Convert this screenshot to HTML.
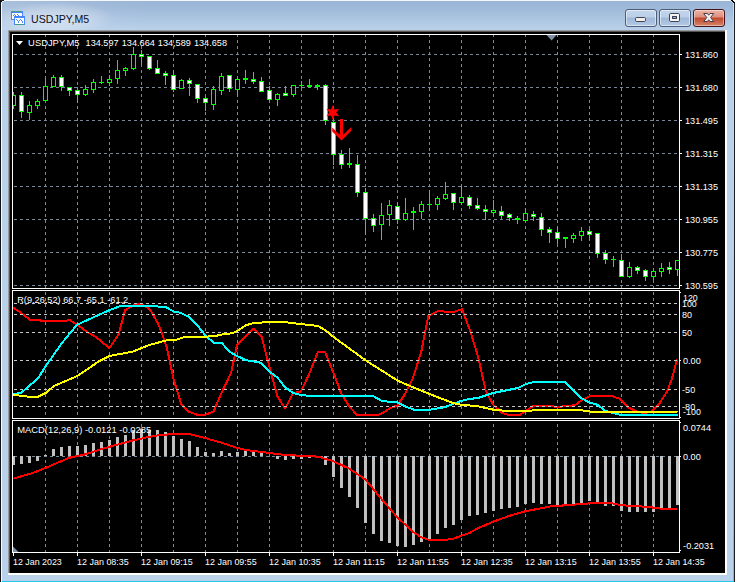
<!DOCTYPE html>
<html>
<head>
<meta charset="utf-8">
<title>USDJPY,M5</title>
<style>
html,body{margin:0;padding:0;}
body{width:737px;height:582px;overflow:hidden;background:#fff;position:relative;font-family:"Liberation Sans",sans-serif;}
#win{position:absolute;left:0;top:0;width:735px;height:582px;background:#b9d1ea;overflow:hidden;}
#tbar{position:absolute;left:0;top:0;width:735px;height:30px;
  background:linear-gradient(to bottom,#99b4d5 0px,#9fb9d9 8px,#adc6e2 20px,#b9d1ea 30px);}
#tglowl{position:absolute;left:0;top:0;width:150px;height:30px;background:linear-gradient(to right,rgba(255,255,255,.14),rgba(255,255,255,0));}
#tglowr{position:absolute;left:600px;top:0;width:135px;height:30px;background:linear-gradient(to right,rgba(255,255,255,0),rgba(255,255,255,.12));}
#tglowt{position:absolute;left:2px;top:2px;width:112px;height:30px;background:radial-gradient(ellipse at 48% 55%,rgba(255,255,255,.42) 0,rgba(255,255,255,.25) 40%,rgba(255,255,255,0) 72%);}
.edge{position:absolute;}
.btn{position:absolute;top:9px;width:30px;height:16px;border:1px solid #4e5d78;border-radius:3px;
  background:linear-gradient(to bottom,#c3d5ec 0,#bacee8 46%,#9fb8d8 48%,#b3c9e5 100%);box-shadow:inset 0 0 0 1px rgba(255,255,255,.5);}
#bclose{border-color:#48121c;background:linear-gradient(to bottom,#eab5a8 0,#dd8d7a 46%,#bf4528 48%,#d5846c 100%);box-shadow:inset 0 0 0 1px rgba(255,255,255,.4);}
</style>
</head>
<body>
<div id="win">
  <div id="tbar"></div><div id="tglowl"></div><div id="tglowt"></div>
  <!-- outer frame lines -->
  <div class="edge" style="left:0;top:0;width:735px;height:1px;background:#f4f7fb"></div>
  <div class="edge" style="left:0;top:0;width:1px;height:582px;background:#101418"></div>
  <div class="edge" style="left:1px;top:1px;width:1px;height:581px;background:#f8fbfe"></div>
  <div class="edge" style="left:733px;top:1px;width:1px;height:581px;background:linear-gradient(to bottom,#a8eafa 0,#8fe3f7 40%,#3fcdee 100%)"></div>
  <div class="edge" style="left:734px;top:2px;width:1px;height:580px;background:#1c2024"></div>
  <div class="edge" style="left:2px;top:581px;width:732px;height:1px;background:#22c6e6"></div>
  <!-- sunken client edge -->
  <div class="edge" style="left:8px;top:30px;width:719px;height:545px;background:#fff"></div>
  <div class="edge" style="left:8px;top:30px;width:717px;height:543px;background:#9a9a9a"></div>
  <div class="edge" style="left:9px;top:31px;width:716px;height:542px;background:#555"></div>
  <!-- corners -->
  <div class="edge" style="left:0;top:0;width:4px;height:1px;background:#1a1a1a"></div>
  <div class="edge" style="left:0;top:1px;width:2px;height:1px;background:#101010"></div>
  <div class="edge" style="left:2px;top:1px;width:2px;height:1px;background:#eef3f9"></div>
  <div class="edge" style="left:1px;top:2px;width:1px;height:1px;background:#d0dbe8"></div>
  <div class="edge" style="left:731px;top:0;width:2px;height:1px;background:#000"></div>
  <div class="edge" style="left:733px;top:0;width:2px;height:1px;background:#fff"></div>
  <div class="edge" style="left:731px;top:1px;width:1px;height:1px;background:#c8eefa"></div>
  <div class="edge" style="left:732px;top:1px;width:2px;height:1px;background:#000"></div>
  <div class="edge" style="left:734px;top:1px;width:1px;height:1px;background:#fff"></div>
  <div class="edge" style="left:732px;top:2px;width:1px;height:1px;background:#9fe4f6"></div>
  <div class="edge" style="left:733px;top:2px;width:2px;height:1px;background:#000"></div>
  <!-- caption buttons -->
  <div class="btn" id="bmin" style="left:625px"></div>
  <div class="btn" id="bmax" style="left:659px"></div>
  <div class="btn" id="bclose" style="left:693px"></div>
</div>
<svg width="737" height="582" viewBox="0 0 737 582" style="position:absolute;left:0;top:0" font-family="'Liberation Sans', sans-serif">
<rect x="10" y="32" width="715" height="541" fill="#000"/>
<g shape-rendering="crispEdges">
<line x1="14" y1="54.5" x2="679" y2="54.5" stroke="#778899" stroke-width="1" stroke-dasharray="3 3"/>
<line x1="14" y1="87.5" x2="679" y2="87.5" stroke="#778899" stroke-width="1" stroke-dasharray="3 3"/>
<line x1="14" y1="120.5" x2="679" y2="120.5" stroke="#778899" stroke-width="1" stroke-dasharray="3 3"/>
<line x1="14" y1="153.5" x2="679" y2="153.5" stroke="#778899" stroke-width="1" stroke-dasharray="3 3"/>
<line x1="14" y1="186.5" x2="679" y2="186.5" stroke="#778899" stroke-width="1" stroke-dasharray="3 3"/>
<line x1="14" y1="219.5" x2="679" y2="219.5" stroke="#778899" stroke-width="1" stroke-dasharray="3 3"/>
<line x1="14" y1="252.5" x2="679" y2="252.5" stroke="#778899" stroke-width="1" stroke-dasharray="3 3"/>
<line x1="14" y1="285.5" x2="679" y2="285.5" stroke="#778899" stroke-width="1" stroke-dasharray="3 3"/>
<line x1="45.5" y1="35" x2="45.5" y2="288" stroke="#778899" stroke-width="1" stroke-dasharray="3 3" stroke-dashoffset="1"/>
<line x1="77.5" y1="35" x2="77.5" y2="288" stroke="#778899" stroke-width="1" stroke-dasharray="3 3" stroke-dashoffset="1"/>
<line x1="109.5" y1="35" x2="109.5" y2="288" stroke="#778899" stroke-width="1" stroke-dasharray="3 3" stroke-dashoffset="1"/>
<line x1="141.5" y1="35" x2="141.5" y2="288" stroke="#778899" stroke-width="1" stroke-dasharray="3 3" stroke-dashoffset="1"/>
<line x1="173.5" y1="35" x2="173.5" y2="288" stroke="#778899" stroke-width="1" stroke-dasharray="3 3" stroke-dashoffset="1"/>
<line x1="205.5" y1="35" x2="205.5" y2="288" stroke="#778899" stroke-width="1" stroke-dasharray="3 3" stroke-dashoffset="1"/>
<line x1="237.5" y1="35" x2="237.5" y2="288" stroke="#778899" stroke-width="1" stroke-dasharray="3 3" stroke-dashoffset="1"/>
<line x1="269.5" y1="35" x2="269.5" y2="288" stroke="#778899" stroke-width="1" stroke-dasharray="3 3" stroke-dashoffset="1"/>
<line x1="301.5" y1="35" x2="301.5" y2="288" stroke="#778899" stroke-width="1" stroke-dasharray="3 3" stroke-dashoffset="1"/>
<line x1="333.5" y1="35" x2="333.5" y2="288" stroke="#778899" stroke-width="1" stroke-dasharray="3 3" stroke-dashoffset="1"/>
<line x1="365.5" y1="35" x2="365.5" y2="288" stroke="#778899" stroke-width="1" stroke-dasharray="3 3" stroke-dashoffset="1"/>
<line x1="397.5" y1="35" x2="397.5" y2="288" stroke="#778899" stroke-width="1" stroke-dasharray="3 3" stroke-dashoffset="1"/>
<line x1="429.5" y1="35" x2="429.5" y2="288" stroke="#778899" stroke-width="1" stroke-dasharray="3 3" stroke-dashoffset="1"/>
<line x1="461.5" y1="35" x2="461.5" y2="288" stroke="#778899" stroke-width="1" stroke-dasharray="3 3" stroke-dashoffset="1"/>
<line x1="493.5" y1="35" x2="493.5" y2="288" stroke="#778899" stroke-width="1" stroke-dasharray="3 3" stroke-dashoffset="1"/>
<line x1="525.5" y1="35" x2="525.5" y2="288" stroke="#778899" stroke-width="1" stroke-dasharray="3 3" stroke-dashoffset="1"/>
<line x1="557.5" y1="35" x2="557.5" y2="288" stroke="#778899" stroke-width="1" stroke-dasharray="3 3" stroke-dashoffset="1"/>
<line x1="589.5" y1="35" x2="589.5" y2="288" stroke="#778899" stroke-width="1" stroke-dasharray="3 3" stroke-dashoffset="1"/>
<line x1="621.5" y1="35" x2="621.5" y2="288" stroke="#778899" stroke-width="1" stroke-dasharray="3 3" stroke-dashoffset="1"/>
<line x1="653.5" y1="35" x2="653.5" y2="288" stroke="#778899" stroke-width="1" stroke-dasharray="3 3" stroke-dashoffset="1"/>
<line x1="45.5" y1="291" x2="45.5" y2="418" stroke="#778899" stroke-width="1" stroke-dasharray="3 3" stroke-dashoffset="5"/>
<line x1="77.5" y1="291" x2="77.5" y2="418" stroke="#778899" stroke-width="1" stroke-dasharray="3 3" stroke-dashoffset="5"/>
<line x1="109.5" y1="291" x2="109.5" y2="418" stroke="#778899" stroke-width="1" stroke-dasharray="3 3" stroke-dashoffset="5"/>
<line x1="141.5" y1="291" x2="141.5" y2="418" stroke="#778899" stroke-width="1" stroke-dasharray="3 3" stroke-dashoffset="5"/>
<line x1="173.5" y1="291" x2="173.5" y2="418" stroke="#778899" stroke-width="1" stroke-dasharray="3 3" stroke-dashoffset="5"/>
<line x1="205.5" y1="291" x2="205.5" y2="418" stroke="#778899" stroke-width="1" stroke-dasharray="3 3" stroke-dashoffset="5"/>
<line x1="237.5" y1="291" x2="237.5" y2="418" stroke="#778899" stroke-width="1" stroke-dasharray="3 3" stroke-dashoffset="5"/>
<line x1="269.5" y1="291" x2="269.5" y2="418" stroke="#778899" stroke-width="1" stroke-dasharray="3 3" stroke-dashoffset="5"/>
<line x1="301.5" y1="291" x2="301.5" y2="418" stroke="#778899" stroke-width="1" stroke-dasharray="3 3" stroke-dashoffset="5"/>
<line x1="333.5" y1="291" x2="333.5" y2="418" stroke="#778899" stroke-width="1" stroke-dasharray="3 3" stroke-dashoffset="5"/>
<line x1="365.5" y1="291" x2="365.5" y2="418" stroke="#778899" stroke-width="1" stroke-dasharray="3 3" stroke-dashoffset="5"/>
<line x1="397.5" y1="291" x2="397.5" y2="418" stroke="#778899" stroke-width="1" stroke-dasharray="3 3" stroke-dashoffset="5"/>
<line x1="429.5" y1="291" x2="429.5" y2="418" stroke="#778899" stroke-width="1" stroke-dasharray="3 3" stroke-dashoffset="5"/>
<line x1="461.5" y1="291" x2="461.5" y2="418" stroke="#778899" stroke-width="1" stroke-dasharray="3 3" stroke-dashoffset="5"/>
<line x1="493.5" y1="291" x2="493.5" y2="418" stroke="#778899" stroke-width="1" stroke-dasharray="3 3" stroke-dashoffset="5"/>
<line x1="525.5" y1="291" x2="525.5" y2="418" stroke="#778899" stroke-width="1" stroke-dasharray="3 3" stroke-dashoffset="5"/>
<line x1="557.5" y1="291" x2="557.5" y2="418" stroke="#778899" stroke-width="1" stroke-dasharray="3 3" stroke-dashoffset="5"/>
<line x1="589.5" y1="291" x2="589.5" y2="418" stroke="#778899" stroke-width="1" stroke-dasharray="3 3" stroke-dashoffset="5"/>
<line x1="621.5" y1="291" x2="621.5" y2="418" stroke="#778899" stroke-width="1" stroke-dasharray="3 3" stroke-dashoffset="5"/>
<line x1="653.5" y1="291" x2="653.5" y2="418" stroke="#778899" stroke-width="1" stroke-dasharray="3 3" stroke-dashoffset="5"/>
<line x1="14" y1="456.5" x2="679" y2="456.5" stroke="#778899" stroke-width="1" stroke-dasharray="3 3"/>
<line x1="45.5" y1="421" x2="45.5" y2="552" stroke="#778899" stroke-width="1" stroke-dasharray="3 3" stroke-dashoffset="3"/>
<line x1="77.5" y1="421" x2="77.5" y2="552" stroke="#778899" stroke-width="1" stroke-dasharray="3 3" stroke-dashoffset="3"/>
<line x1="109.5" y1="421" x2="109.5" y2="552" stroke="#778899" stroke-width="1" stroke-dasharray="3 3" stroke-dashoffset="3"/>
<line x1="141.5" y1="421" x2="141.5" y2="552" stroke="#778899" stroke-width="1" stroke-dasharray="3 3" stroke-dashoffset="3"/>
<line x1="173.5" y1="421" x2="173.5" y2="552" stroke="#778899" stroke-width="1" stroke-dasharray="3 3" stroke-dashoffset="3"/>
<line x1="205.5" y1="421" x2="205.5" y2="552" stroke="#778899" stroke-width="1" stroke-dasharray="3 3" stroke-dashoffset="3"/>
<line x1="237.5" y1="421" x2="237.5" y2="552" stroke="#778899" stroke-width="1" stroke-dasharray="3 3" stroke-dashoffset="3"/>
<line x1="269.5" y1="421" x2="269.5" y2="552" stroke="#778899" stroke-width="1" stroke-dasharray="3 3" stroke-dashoffset="3"/>
<line x1="301.5" y1="421" x2="301.5" y2="552" stroke="#778899" stroke-width="1" stroke-dasharray="3 3" stroke-dashoffset="3"/>
<line x1="333.5" y1="421" x2="333.5" y2="552" stroke="#778899" stroke-width="1" stroke-dasharray="3 3" stroke-dashoffset="3"/>
<line x1="365.5" y1="421" x2="365.5" y2="552" stroke="#778899" stroke-width="1" stroke-dasharray="3 3" stroke-dashoffset="3"/>
<line x1="397.5" y1="421" x2="397.5" y2="552" stroke="#778899" stroke-width="1" stroke-dasharray="3 3" stroke-dashoffset="3"/>
<line x1="429.5" y1="421" x2="429.5" y2="552" stroke="#778899" stroke-width="1" stroke-dasharray="3 3" stroke-dashoffset="3"/>
<line x1="461.5" y1="421" x2="461.5" y2="552" stroke="#778899" stroke-width="1" stroke-dasharray="3 3" stroke-dashoffset="3"/>
<line x1="493.5" y1="421" x2="493.5" y2="552" stroke="#778899" stroke-width="1" stroke-dasharray="3 3" stroke-dashoffset="3"/>
<line x1="525.5" y1="421" x2="525.5" y2="552" stroke="#778899" stroke-width="1" stroke-dasharray="3 3" stroke-dashoffset="3"/>
<line x1="557.5" y1="421" x2="557.5" y2="552" stroke="#778899" stroke-width="1" stroke-dasharray="3 3" stroke-dashoffset="3"/>
<line x1="589.5" y1="421" x2="589.5" y2="552" stroke="#778899" stroke-width="1" stroke-dasharray="3 3" stroke-dashoffset="3"/>
<line x1="621.5" y1="421" x2="621.5" y2="552" stroke="#778899" stroke-width="1" stroke-dasharray="3 3" stroke-dashoffset="3"/>
<line x1="653.5" y1="421" x2="653.5" y2="552" stroke="#778899" stroke-width="1" stroke-dasharray="3 3" stroke-dashoffset="3"/>
</g>
<defs><clipPath id="cx"><rect x="13" y="35" width="666" height="517"/></clipPath></defs>
<g clip-path="url(#cx)">
<g shape-rendering="crispEdges" fill="#c0c0c0">
<rect x="12" y="456" width="3" height="9"/>
<rect x="20" y="456" width="3" height="8"/>
<rect x="28" y="456" width="3" height="7"/>
<rect x="36" y="456" width="3" height="5"/>
<rect x="44" y="455" width="3" height="1"/>
<rect x="52" y="449" width="3" height="7"/>
<rect x="60" y="447" width="3" height="9"/>
<rect x="68" y="446" width="3" height="10"/>
<rect x="76" y="446" width="3" height="10"/>
<rect x="84" y="445" width="3" height="11"/>
<rect x="92" y="443" width="3" height="13"/>
<rect x="100" y="442" width="3" height="14"/>
<rect x="108" y="440" width="3" height="16"/>
<rect x="116" y="437" width="3" height="19"/>
<rect x="124" y="435" width="3" height="21"/>
<rect x="132" y="430" width="3" height="26"/>
<rect x="140" y="429" width="3" height="27"/>
<rect x="148" y="430" width="3" height="26"/>
<rect x="156" y="430" width="3" height="26"/>
<rect x="164" y="432" width="3" height="24"/>
<rect x="172" y="436" width="3" height="20"/>
<rect x="180" y="439" width="3" height="17"/>
<rect x="188" y="441" width="3" height="15"/>
<rect x="196" y="447" width="3" height="9"/>
<rect x="204" y="452" width="3" height="4"/>
<rect x="212" y="453" width="3" height="3"/>
<rect x="220" y="451" width="3" height="5"/>
<rect x="228" y="453" width="3" height="3"/>
<rect x="236" y="452" width="3" height="4"/>
<rect x="244" y="450" width="3" height="6"/>
<rect x="252" y="451" width="3" height="5"/>
<rect x="260" y="453" width="3" height="3"/>
<rect x="276" y="456" width="3" height="3"/>
<rect x="284" y="456" width="3" height="4"/>
<rect x="292" y="456" width="3" height="3"/>
<rect x="300" y="456" width="3" height="3"/>
<rect x="308" y="456" width="3" height="2"/>
<rect x="316" y="456" width="3" height="1"/>
<rect x="324" y="456" width="3" height="9"/>
<rect x="332" y="456" width="3" height="21"/>
<rect x="340" y="456" width="3" height="32"/>
<rect x="348" y="456" width="3" height="41"/>
<rect x="356" y="456" width="3" height="52"/>
<rect x="364" y="456" width="3" height="67"/>
<rect x="372" y="456" width="3" height="78"/>
<rect x="380" y="456" width="3" height="85"/>
<rect x="388" y="456" width="3" height="87"/>
<rect x="396" y="456" width="3" height="90"/>
<rect x="404" y="456" width="3" height="91"/>
<rect x="412" y="456" width="3" height="89"/>
<rect x="420" y="456" width="3" height="86"/>
<rect x="428" y="456" width="3" height="83"/>
<rect x="436" y="456" width="3" height="78"/>
<rect x="444" y="456" width="3" height="72"/>
<rect x="452" y="456" width="3" height="69"/>
<rect x="460" y="456" width="3" height="64"/>
<rect x="468" y="456" width="3" height="60"/>
<rect x="476" y="456" width="3" height="59"/>
<rect x="484" y="456" width="3" height="57"/>
<rect x="492" y="456" width="3" height="55"/>
<rect x="500" y="456" width="3" height="53"/>
<rect x="508" y="456" width="3" height="52"/>
<rect x="516" y="456" width="3" height="51"/>
<rect x="524" y="456" width="3" height="48"/>
<rect x="532" y="456" width="3" height="47"/>
<rect x="540" y="456" width="3" height="48"/>
<rect x="548" y="456" width="3" height="48"/>
<rect x="556" y="456" width="3" height="49"/>
<rect x="564" y="456" width="3" height="49"/>
<rect x="572" y="456" width="3" height="48"/>
<rect x="580" y="456" width="3" height="47"/>
<rect x="588" y="456" width="3" height="45"/>
<rect x="596" y="456" width="3" height="47"/>
<rect x="604" y="456" width="3" height="50"/>
<rect x="612" y="456" width="3" height="50"/>
<rect x="620" y="456" width="3" height="55"/>
<rect x="628" y="456" width="3" height="56"/>
<rect x="636" y="456" width="3" height="56"/>
<rect x="644" y="456" width="3" height="56"/>
<rect x="652" y="456" width="3" height="56"/>
<rect x="660" y="456" width="3" height="53"/>
<rect x="668" y="456" width="3" height="52"/>
<rect x="676" y="456" width="3" height="49"/>
</g>
<g shape-rendering="crispEdges">
<rect x="13" y="92" width="1" height="17" fill="#00ff00"/>
<rect x="11" y="95" width="5" height="11" fill="#00ff00"/>
<rect x="12" y="96" width="3" height="9" fill="#000"/>
<rect x="21" y="92" width="1" height="26" fill="#00ff00"/>
<rect x="19" y="95" width="5" height="17" fill="#00ff00"/>
<rect x="20" y="96" width="3" height="15" fill="#fff"/>
<rect x="29" y="101" width="1" height="19" fill="#00ff00"/>
<rect x="27" y="105" width="5" height="8" fill="#00ff00"/>
<rect x="28" y="106" width="3" height="6" fill="#000"/>
<rect x="37" y="99" width="1" height="10" fill="#00ff00"/>
<rect x="35" y="101" width="5" height="5" fill="#00ff00"/>
<rect x="36" y="102" width="3" height="3" fill="#000"/>
<rect x="45" y="78" width="1" height="23" fill="#00ff00"/>
<rect x="43" y="86" width="5" height="15" fill="#00ff00"/>
<rect x="44" y="87" width="3" height="13" fill="#000"/>
<rect x="53" y="75" width="1" height="12" fill="#00ff00"/>
<rect x="51" y="77" width="5" height="10" fill="#00ff00"/>
<rect x="52" y="78" width="3" height="8" fill="#000"/>
<rect x="61" y="75" width="1" height="16" fill="#00ff00"/>
<rect x="59" y="77" width="5" height="10" fill="#00ff00"/>
<rect x="60" y="78" width="3" height="8" fill="#fff"/>
<rect x="69" y="87" width="1" height="9" fill="#00ff00"/>
<rect x="67" y="87" width="5" height="4" fill="#00ff00"/>
<rect x="68" y="88" width="3" height="2" fill="#fff"/>
<rect x="77" y="87" width="1" height="16" fill="#00ff00"/>
<rect x="75" y="90" width="5" height="5" fill="#00ff00"/>
<rect x="76" y="91" width="3" height="3" fill="#fff"/>
<rect x="85" y="85" width="1" height="11" fill="#00ff00"/>
<rect x="83" y="89" width="5" height="6" fill="#00ff00"/>
<rect x="84" y="90" width="3" height="4" fill="#000"/>
<rect x="93" y="79" width="1" height="14" fill="#00ff00"/>
<rect x="91" y="82" width="5" height="8" fill="#00ff00"/>
<rect x="92" y="83" width="3" height="6" fill="#000"/>
<rect x="101" y="76" width="1" height="8" fill="#00ff00"/>
<rect x="99" y="82" width="5" height="1" fill="#00ff00"/>
<rect x="109" y="75" width="1" height="11" fill="#00ff00"/>
<rect x="107" y="79" width="5" height="4" fill="#00ff00"/>
<rect x="108" y="80" width="3" height="2" fill="#000"/>
<rect x="117" y="60" width="1" height="24" fill="#00ff00"/>
<rect x="115" y="70" width="5" height="9" fill="#00ff00"/>
<rect x="116" y="71" width="3" height="7" fill="#000"/>
<rect x="125" y="67" width="1" height="9" fill="#00ff00"/>
<rect x="123" y="68" width="5" height="3" fill="#00ff00"/>
<rect x="124" y="69" width="3" height="1" fill="#000"/>
<rect x="133" y="47" width="1" height="23" fill="#00ff00"/>
<rect x="131" y="54" width="5" height="15" fill="#00ff00"/>
<rect x="132" y="55" width="3" height="13" fill="#000"/>
<rect x="141" y="50" width="1" height="15" fill="#00ff00"/>
<rect x="139" y="54" width="5" height="3" fill="#00ff00"/>
<rect x="140" y="55" width="3" height="1" fill="#fff"/>
<rect x="149" y="56" width="1" height="14" fill="#00ff00"/>
<rect x="147" y="56" width="5" height="13" fill="#00ff00"/>
<rect x="148" y="57" width="3" height="11" fill="#fff"/>
<rect x="157" y="60" width="1" height="14" fill="#00ff00"/>
<rect x="155" y="68" width="5" height="6" fill="#00ff00"/>
<rect x="156" y="69" width="3" height="4" fill="#fff"/>
<rect x="165" y="71" width="1" height="14" fill="#00ff00"/>
<rect x="163" y="73" width="5" height="3" fill="#00ff00"/>
<rect x="164" y="74" width="3" height="1" fill="#fff"/>
<rect x="173" y="70" width="1" height="22" fill="#00ff00"/>
<rect x="171" y="75" width="5" height="15" fill="#00ff00"/>
<rect x="172" y="76" width="3" height="13" fill="#fff"/>
<rect x="181" y="79" width="1" height="10" fill="#00ff00"/>
<rect x="179" y="80" width="5" height="9" fill="#00ff00"/>
<rect x="180" y="81" width="3" height="7" fill="#000"/>
<rect x="189" y="78" width="1" height="18" fill="#00ff00"/>
<rect x="187" y="80" width="5" height="4" fill="#00ff00"/>
<rect x="188" y="81" width="3" height="2" fill="#fff"/>
<rect x="197" y="84" width="1" height="19" fill="#00ff00"/>
<rect x="195" y="84" width="5" height="15" fill="#00ff00"/>
<rect x="196" y="85" width="3" height="13" fill="#fff"/>
<rect x="205" y="97" width="1" height="14" fill="#00ff00"/>
<rect x="203" y="98" width="5" height="5" fill="#00ff00"/>
<rect x="204" y="99" width="3" height="3" fill="#fff"/>
<rect x="213" y="86" width="1" height="24" fill="#00ff00"/>
<rect x="211" y="89" width="5" height="16" fill="#00ff00"/>
<rect x="212" y="90" width="3" height="14" fill="#000"/>
<rect x="221" y="73" width="1" height="22" fill="#00ff00"/>
<rect x="219" y="76" width="5" height="15" fill="#00ff00"/>
<rect x="220" y="77" width="3" height="13" fill="#000"/>
<rect x="229" y="75" width="1" height="17" fill="#00ff00"/>
<rect x="227" y="75" width="5" height="14" fill="#00ff00"/>
<rect x="228" y="76" width="3" height="12" fill="#fff"/>
<rect x="237" y="77" width="1" height="20" fill="#00ff00"/>
<rect x="235" y="79" width="5" height="11" fill="#00ff00"/>
<rect x="236" y="80" width="3" height="9" fill="#000"/>
<rect x="245" y="70" width="1" height="14" fill="#00ff00"/>
<rect x="243" y="78" width="5" height="2" fill="#00ff00"/>
<rect x="253" y="72" width="1" height="12" fill="#00ff00"/>
<rect x="251" y="79" width="5" height="3" fill="#00ff00"/>
<rect x="252" y="80" width="3" height="1" fill="#fff"/>
<rect x="261" y="77" width="1" height="15" fill="#00ff00"/>
<rect x="259" y="81" width="5" height="11" fill="#00ff00"/>
<rect x="260" y="82" width="3" height="9" fill="#fff"/>
<rect x="269" y="86" width="1" height="15" fill="#00ff00"/>
<rect x="267" y="90" width="5" height="10" fill="#00ff00"/>
<rect x="268" y="91" width="3" height="8" fill="#fff"/>
<rect x="277" y="93" width="1" height="13" fill="#00ff00"/>
<rect x="275" y="94" width="5" height="6" fill="#00ff00"/>
<rect x="276" y="95" width="3" height="4" fill="#000"/>
<rect x="285" y="86" width="1" height="9" fill="#00ff00"/>
<rect x="283" y="93" width="5" height="3" fill="#00ff00"/>
<rect x="284" y="94" width="3" height="1" fill="#fff"/>
<rect x="293" y="85" width="1" height="12" fill="#00ff00"/>
<rect x="291" y="85" width="5" height="10" fill="#00ff00"/>
<rect x="292" y="86" width="3" height="8" fill="#000"/>
<rect x="301" y="81" width="1" height="7" fill="#00ff00"/>
<rect x="299" y="85" width="5" height="1" fill="#00ff00"/>
<rect x="309" y="79" width="1" height="9" fill="#00ff00"/>
<rect x="307" y="85" width="5" height="2" fill="#00ff00"/>
<rect x="317" y="84" width="1" height="6" fill="#00ff00"/>
<rect x="315" y="85" width="5" height="2" fill="#00ff00"/>
<rect x="325" y="84" width="1" height="41" fill="#00ff00"/>
<rect x="323" y="85" width="5" height="36" fill="#00ff00"/>
<rect x="324" y="86" width="3" height="34" fill="#fff"/>
<rect x="333" y="121" width="1" height="44" fill="#00ff00"/>
<rect x="331" y="122" width="5" height="33" fill="#00ff00"/>
<rect x="332" y="123" width="3" height="31" fill="#fff"/>
<rect x="341" y="150" width="1" height="19" fill="#00ff00"/>
<rect x="339" y="154" width="5" height="11" fill="#00ff00"/>
<rect x="340" y="155" width="3" height="9" fill="#fff"/>
<rect x="349" y="148" width="1" height="20" fill="#00ff00"/>
<rect x="347" y="163" width="5" height="2" fill="#00ff00"/>
<rect x="357" y="155" width="1" height="42" fill="#00ff00"/>
<rect x="355" y="164" width="5" height="29" fill="#00ff00"/>
<rect x="356" y="165" width="3" height="27" fill="#fff"/>
<rect x="365" y="188" width="1" height="46" fill="#00ff00"/>
<rect x="363" y="192" width="5" height="27" fill="#00ff00"/>
<rect x="364" y="193" width="3" height="25" fill="#fff"/>
<rect x="373" y="214" width="1" height="18" fill="#00ff00"/>
<rect x="371" y="218" width="5" height="8" fill="#00ff00"/>
<rect x="372" y="219" width="3" height="6" fill="#fff"/>
<rect x="381" y="203" width="1" height="37" fill="#00ff00"/>
<rect x="379" y="215" width="5" height="10" fill="#00ff00"/>
<rect x="380" y="216" width="3" height="8" fill="#000"/>
<rect x="389" y="200" width="1" height="26" fill="#00ff00"/>
<rect x="387" y="205" width="5" height="10" fill="#00ff00"/>
<rect x="388" y="206" width="3" height="8" fill="#000"/>
<rect x="397" y="202" width="1" height="22" fill="#00ff00"/>
<rect x="395" y="206" width="5" height="14" fill="#00ff00"/>
<rect x="396" y="207" width="3" height="12" fill="#fff"/>
<rect x="405" y="198" width="1" height="23" fill="#00ff00"/>
<rect x="403" y="213" width="5" height="7" fill="#00ff00"/>
<rect x="404" y="214" width="3" height="5" fill="#000"/>
<rect x="413" y="207" width="1" height="23" fill="#00ff00"/>
<rect x="411" y="211" width="5" height="2" fill="#00ff00"/>
<rect x="421" y="201" width="1" height="18" fill="#00ff00"/>
<rect x="419" y="204" width="5" height="8" fill="#00ff00"/>
<rect x="420" y="205" width="3" height="6" fill="#000"/>
<rect x="429" y="190" width="1" height="20" fill="#00ff00"/>
<rect x="427" y="204" width="5" height="1" fill="#00ff00"/>
<rect x="437" y="196" width="1" height="14" fill="#00ff00"/>
<rect x="435" y="198" width="5" height="7" fill="#00ff00"/>
<rect x="436" y="199" width="3" height="5" fill="#000"/>
<rect x="445" y="182" width="1" height="18" fill="#00ff00"/>
<rect x="443" y="194" width="5" height="5" fill="#00ff00"/>
<rect x="444" y="195" width="3" height="3" fill="#000"/>
<rect x="453" y="193" width="1" height="17" fill="#00ff00"/>
<rect x="451" y="193" width="5" height="10" fill="#00ff00"/>
<rect x="452" y="194" width="3" height="8" fill="#fff"/>
<rect x="461" y="186" width="1" height="19" fill="#00ff00"/>
<rect x="459" y="197" width="5" height="6" fill="#00ff00"/>
<rect x="460" y="198" width="3" height="4" fill="#000"/>
<rect x="469" y="195" width="1" height="14" fill="#00ff00"/>
<rect x="467" y="197" width="5" height="9" fill="#00ff00"/>
<rect x="468" y="198" width="3" height="7" fill="#fff"/>
<rect x="477" y="198" width="1" height="12" fill="#00ff00"/>
<rect x="475" y="205" width="5" height="4" fill="#00ff00"/>
<rect x="476" y="206" width="3" height="2" fill="#fff"/>
<rect x="485" y="205" width="1" height="15" fill="#00ff00"/>
<rect x="483" y="209" width="5" height="3" fill="#00ff00"/>
<rect x="484" y="210" width="3" height="1" fill="#fff"/>
<rect x="493" y="200" width="1" height="14" fill="#00ff00"/>
<rect x="491" y="210" width="5" height="3" fill="#00ff00"/>
<rect x="492" y="211" width="3" height="1" fill="#000"/>
<rect x="501" y="206" width="1" height="13" fill="#00ff00"/>
<rect x="499" y="211" width="5" height="5" fill="#00ff00"/>
<rect x="500" y="212" width="3" height="3" fill="#fff"/>
<rect x="509" y="213" width="1" height="8" fill="#00ff00"/>
<rect x="507" y="214" width="5" height="4" fill="#00ff00"/>
<rect x="508" y="215" width="3" height="2" fill="#fff"/>
<rect x="517" y="216" width="1" height="8" fill="#00ff00"/>
<rect x="515" y="218" width="5" height="2" fill="#00ff00"/>
<rect x="525" y="208" width="1" height="14" fill="#00ff00"/>
<rect x="523" y="213" width="5" height="8" fill="#00ff00"/>
<rect x="524" y="214" width="3" height="6" fill="#000"/>
<rect x="533" y="211" width="1" height="10" fill="#00ff00"/>
<rect x="531" y="214" width="5" height="3" fill="#00ff00"/>
<rect x="532" y="215" width="3" height="1" fill="#fff"/>
<rect x="541" y="213" width="1" height="23" fill="#00ff00"/>
<rect x="539" y="217" width="5" height="13" fill="#00ff00"/>
<rect x="540" y="218" width="3" height="11" fill="#fff"/>
<rect x="549" y="227" width="1" height="16" fill="#00ff00"/>
<rect x="547" y="229" width="5" height="4" fill="#00ff00"/>
<rect x="548" y="230" width="3" height="2" fill="#fff"/>
<rect x="557" y="226" width="1" height="18" fill="#00ff00"/>
<rect x="555" y="232" width="5" height="7" fill="#00ff00"/>
<rect x="556" y="233" width="3" height="5" fill="#fff"/>
<rect x="565" y="237" width="1" height="11" fill="#00ff00"/>
<rect x="563" y="237" width="5" height="2" fill="#00ff00"/>
<rect x="573" y="233" width="1" height="10" fill="#00ff00"/>
<rect x="571" y="235" width="5" height="4" fill="#00ff00"/>
<rect x="572" y="236" width="3" height="2" fill="#000"/>
<rect x="581" y="227" width="1" height="14" fill="#00ff00"/>
<rect x="579" y="231" width="5" height="5" fill="#00ff00"/>
<rect x="580" y="232" width="3" height="3" fill="#000"/>
<rect x="589" y="229" width="1" height="11" fill="#00ff00"/>
<rect x="587" y="231" width="5" height="4" fill="#00ff00"/>
<rect x="588" y="232" width="3" height="2" fill="#fff"/>
<rect x="597" y="233" width="1" height="25" fill="#00ff00"/>
<rect x="595" y="233" width="5" height="21" fill="#00ff00"/>
<rect x="596" y="234" width="3" height="19" fill="#fff"/>
<rect x="605" y="250" width="1" height="14" fill="#00ff00"/>
<rect x="603" y="253" width="5" height="7" fill="#00ff00"/>
<rect x="604" y="254" width="3" height="5" fill="#fff"/>
<rect x="613" y="256" width="1" height="11" fill="#00ff00"/>
<rect x="611" y="259" width="5" height="1" fill="#00ff00"/>
<rect x="621" y="254" width="1" height="23" fill="#00ff00"/>
<rect x="619" y="260" width="5" height="17" fill="#00ff00"/>
<rect x="620" y="261" width="3" height="15" fill="#fff"/>
<rect x="629" y="262" width="1" height="16" fill="#00ff00"/>
<rect x="627" y="267" width="5" height="10" fill="#00ff00"/>
<rect x="628" y="268" width="3" height="8" fill="#000"/>
<rect x="637" y="266" width="1" height="8" fill="#00ff00"/>
<rect x="635" y="267" width="5" height="4" fill="#00ff00"/>
<rect x="636" y="268" width="3" height="2" fill="#fff"/>
<rect x="645" y="269" width="1" height="12" fill="#00ff00"/>
<rect x="643" y="270" width="5" height="7" fill="#00ff00"/>
<rect x="644" y="271" width="3" height="5" fill="#fff"/>
<rect x="653" y="269" width="1" height="11" fill="#00ff00"/>
<rect x="651" y="271" width="5" height="6" fill="#00ff00"/>
<rect x="652" y="272" width="3" height="4" fill="#000"/>
<rect x="661" y="263" width="1" height="14" fill="#00ff00"/>
<rect x="659" y="268" width="5" height="4" fill="#00ff00"/>
<rect x="660" y="269" width="3" height="2" fill="#000"/>
<rect x="669" y="262" width="1" height="12" fill="#00ff00"/>
<rect x="667" y="267" width="5" height="3" fill="#00ff00"/>
<rect x="668" y="268" width="3" height="1" fill="#fff"/>
<rect x="677" y="260" width="1" height="16" fill="#00ff00"/>
<rect x="675" y="260" width="5" height="10" fill="#00ff00"/>
<rect x="676" y="261" width="3" height="8" fill="#000"/>
</g>
<polygon points="332.80,105.00 334.50,109.56 339.30,108.75 336.20,112.50 339.30,116.25 334.50,115.44 332.80,120.00 331.10,115.44 326.30,116.25 329.40,112.50 326.30,108.75 331.10,109.56" fill="#ff0000"/>
<path d="M341.5 119 V139" stroke="#ff0000" stroke-width="3" fill="none"/>
<polygon points="332.2,127.6 332.2,131.4 341.5,140.6 351.3,130.8 351.3,126.9 341.5,136.4" fill="#ff0000"/>
<g shape-rendering="crispEdges">
<polyline points="13.4,307.5 30.1,319.8 53.6,321.4 70.3,320.3 77.0,324.8 87.1,331.9 96.0,337.0 109.4,348.2 118.4,334.8 125.1,310.2 135.1,304.2 141.8,304.2 149.7,309.1 157.5,322.5 161.1,331.0 166.7,347.1 173.4,378.4 181.2,404.1 189.1,411.9 196.9,414.6 205.8,414.6 213.6,411.5 221.5,392.9 231.1,372.8 237.1,344.9 253.4,328.8 261.7,337.0 269.5,367.2 277.3,396.3 285.1,408.6 293.0,392.9 300.8,391.8 309.7,372.8 317.8,352.2 325.2,352.2 333.5,372.8 341.3,393.6 349.1,406.3 357.4,415.3 377.0,415.3 381.5,413.7 389.3,408.6 397.6,405.2 405.0,394.0 412.8,378.4 421.3,351.6 428.4,315.8 438.5,310.9 446.3,311.8 454.1,311.8 462.0,309.1 470.0,330.3 477.9,356.0 485.7,390.7 493.5,405.2 501.3,412.4 509.2,415.3 519.2,415.3 525.9,410.8 533.7,405.6 548.3,405.6 557.2,407.0 575.1,405.2 581.8,400.1 589.6,396.3 613.1,396.3 620.6,399.2 628.4,407.4 637.3,411.9 644.0,413.0 651.9,411.5 659.7,403.0 667.5,390.7 672.0,378.4 677.1,359.4" fill="none" stroke="#ff0000" stroke-width="2" stroke-linejoin="round" stroke-linecap="butt"/>
<line x1="14" y1="303.5" x2="679" y2="303.5" stroke="#c8c8c8" stroke-width="1" stroke-dasharray="3 3"/>
<line x1="14" y1="314.5" x2="679" y2="314.5" stroke="#c8c8c8" stroke-width="1" stroke-dasharray="3 3"/>
<line x1="14" y1="332.5" x2="679" y2="332.5" stroke="#c8c8c8" stroke-width="1" stroke-dasharray="3 3"/>
<line x1="14" y1="360.5" x2="679" y2="360.5" stroke="#c8c8c8" stroke-width="1" stroke-dasharray="3 3"/>
<line x1="14" y1="389.5" x2="679" y2="389.5" stroke="#c8c8c8" stroke-width="1" stroke-dasharray="3 3"/>
<line x1="14" y1="406.5" x2="679" y2="406.5" stroke="#c8c8c8" stroke-width="1" stroke-dasharray="3 3"/>
<polyline points="13.4,394.0 21.2,392.9 37.9,378.4 45.8,366.1 61.4,343.7 77.0,324.8 92.7,317.6 109.4,310.2 119.5,306.4 144.1,305.8 165.6,306.9 173.4,311.3 181.2,313.1 189.1,316.9 196.9,324.8 205.8,335.9 213.6,342.6 221.5,342.6 229.3,351.6 237.1,356.0 246.0,360.1 260.6,362.7 269.5,371.7 277.3,377.3 285.1,387.3 293.0,392.9 300.8,395.1 309.7,395.8 372.6,395.8 381.5,400.7 389.3,401.8 397.6,402.5 405.0,406.3 413.9,409.7 429.6,409.7 444.1,407.4 454.1,403.4 462.0,400.7 470.0,398.9 477.9,398.0 493.5,392.9 518.1,388.0 525.9,384.0 534.9,381.7 565.0,381.7 574.0,390.7 581.8,398.5 589.6,402.5 597.4,404.8 605.3,410.8 613.1,413.0 621.7,415.3 666.4,415.3 677.6,414.6" fill="none" stroke="#00ffff" stroke-width="2" stroke-linejoin="round" stroke-linecap="butt"/>
<polyline points="13.4,395.1 23.4,395.8 30.1,397.2 37.9,396.9 45.8,392.9 53.6,386.2 77.0,376.2 87.1,369.4 99.4,361.0 109.4,356.0 132.9,351.6 149.7,344.9 166.4,340.4 175.6,339.9 184.6,337.0 213.6,336.4 223.7,334.1 232.6,333.2 238.2,330.3 246.0,325.2 253.9,323.0 269.5,322.1 285.1,322.1 293.0,323.2 303.0,324.3 317.8,325.9 325.6,330.3 333.5,337.0 365.9,360.5 397.6,380.6 412.8,387.3 429.6,394.0 444.1,399.6 454.1,403.4 462.0,404.8 477.9,406.3 493.5,409.7 509.2,411.2 527.0,411.2 534.9,410.1 580.7,410.1 589.6,411.5 621.7,412.4 661.9,412.4 677.6,411.5" fill="none" stroke="#ffff00" stroke-width="2" stroke-linejoin="round" stroke-linecap="butt"/>
<polyline points="13.5,478.6 33.2,472.8 44.8,468.2 69.1,457.8 85.4,454.3 101.6,448.9 117.8,444.5 132.9,440.4 149.1,436.9 158.4,435.3 173.9,433.9 189.0,433.9 205.2,438.1 221.4,442.7 237.7,448.0 247.0,450.1 262.0,452.0 278.3,454.3 301.4,455.9 317.7,456.6 333.2,461.2 349.4,468.7 365.7,479.8 381.9,499.5 397.0,516.9 413.2,532.0 421.3,537.3 429.4,540.1 444.5,540.1 453.8,538.5 470.0,532.7 477.4,528.5 493.6,521.5 509.9,515.7 526.1,511.1 550.4,506.5 573.6,504.6 589.8,503.4 612.9,503.4 621.1,505.3 637.3,506.0 653.5,507.6 661.6,508.8 677.4,509.2" fill="none" stroke="#ff0000" stroke-width="2" stroke-linejoin="round" stroke-linecap="butt"/>
</g>
</g>
<g shape-rendering="crispEdges" fill="none" stroke="#fff" stroke-width="1">
<rect x="12.5" y="34.5" width="667" height="254"/>
<rect x="12.5" y="290.5" width="667" height="128"/>
<rect x="12.5" y="420.5" width="667" height="132"/>
</g>
<g shape-rendering="crispEdges" fill="#fff">
<rect x="680" y="54" width="2" height="1" fill="#fff"/>
<rect x="680" y="87" width="2" height="1" fill="#fff"/>
<rect x="680" y="120" width="2" height="1" fill="#fff"/>
<rect x="680" y="153" width="2" height="1" fill="#fff"/>
<rect x="680" y="186" width="2" height="1" fill="#fff"/>
<rect x="680" y="219" width="2" height="1" fill="#fff"/>
<rect x="680" y="252" width="2" height="1" fill="#fff"/>
<rect x="680" y="285" width="2" height="1" fill="#fff"/>
<rect x="680" y="292" width="1" height="1" fill="#fff"/>
<rect x="680" y="360" width="1" height="1" fill="#fff"/>
<rect x="680" y="417" width="1" height="1" fill="#fff"/>
<rect x="680" y="422" width="1" height="1" fill="#fff"/>
<rect x="680" y="456" width="1" height="1" fill="#fff"/>
<rect x="680" y="550" width="1" height="1" fill="#fff"/>
<rect x="13" y="553" width="1" height="3" fill="#fff"/>
<rect x="77" y="553" width="1" height="3" fill="#fff"/>
<rect x="141" y="553" width="1" height="3" fill="#fff"/>
<rect x="205" y="553" width="1" height="3" fill="#fff"/>
<rect x="269" y="553" width="1" height="3" fill="#fff"/>
<rect x="333" y="553" width="1" height="3" fill="#fff"/>
<rect x="397" y="553" width="1" height="3" fill="#fff"/>
<rect x="461" y="553" width="1" height="3" fill="#fff"/>
<rect x="525" y="553" width="1" height="3" fill="#fff"/>
<rect x="589" y="553" width="1" height="3" fill="#fff"/>
<rect x="653" y="553" width="1" height="3" fill="#fff"/>
</g>
<polygon points="16,41 23,41 19.5,45" fill="#fff"/>
<polygon points="13,546.5 13,552 18.5,552" fill="#7f90a4"/>
<polygon points="546.6,35 556.6,35 551.6,40.4" fill="#7f90a4"/>
<g fill="#fff" font-size="9.6" font-family="'Liberation Sans', sans-serif" lengthAdjust="spacingAndGlyphs">
<text x="28.1" y="46" textLength="51.5" lengthAdjust="spacingAndGlyphs">USDJPY,M5</text>
<text x="85.6" y="46" textLength="33" lengthAdjust="spacingAndGlyphs">134.597</text>
<text x="121.7" y="46" textLength="33.2" lengthAdjust="spacingAndGlyphs">134.664</text>
<text x="157.8" y="46" textLength="33.1" lengthAdjust="spacingAndGlyphs">134,589</text>
<text x="193.9" y="46" textLength="33.1" lengthAdjust="spacingAndGlyphs">134.658</text>
<text x="17.2" y="303" textLength="111" lengthAdjust="spacingAndGlyphs">R(9,26,52) 66.7 -65.1 -61.2</text>
<text x="17.2" y="433" textLength="134" lengthAdjust="spacingAndGlyphs">MACD(12,26,9) -0.0121 -0.0285</text>
<text x="685" y="57.8" textLength="33" lengthAdjust="spacingAndGlyphs">131.860</text>
<text x="685" y="90.8" textLength="33" lengthAdjust="spacingAndGlyphs">131.680</text>
<text x="685" y="123.8" textLength="33" lengthAdjust="spacingAndGlyphs">131.495</text>
<text x="685" y="156.8" textLength="33" lengthAdjust="spacingAndGlyphs">131.315</text>
<text x="685" y="189.8" textLength="33" lengthAdjust="spacingAndGlyphs">131.135</text>
<text x="685" y="222.8" textLength="33" lengthAdjust="spacingAndGlyphs">130.955</text>
<text x="685" y="255.8" textLength="33" lengthAdjust="spacingAndGlyphs">130.775</text>
<text x="685" y="288.8" textLength="33" lengthAdjust="spacingAndGlyphs">130.595</text>
<text x="683" y="301" textLength="14.8" lengthAdjust="spacingAndGlyphs">120</text>
<text x="682" y="307" textLength="14.8" lengthAdjust="spacingAndGlyphs">100</text>
<text x="682" y="318" textLength="10" lengthAdjust="spacingAndGlyphs">80</text>
<text x="682" y="336" textLength="10" lengthAdjust="spacingAndGlyphs">50</text>
<text x="683" y="364" textLength="17.8" lengthAdjust="spacingAndGlyphs">0.00</text>
<text x="682.1" y="393" textLength="13.1" lengthAdjust="spacingAndGlyphs">-50</text>
<text x="682.1" y="410" textLength="13.1" lengthAdjust="spacingAndGlyphs">-80</text>
<text x="683.1" y="415" textLength="17.8" lengthAdjust="spacingAndGlyphs">-100</text>
<text x="683" y="431" textLength="28" lengthAdjust="spacingAndGlyphs">0.0744</text>
<text x="683" y="460" textLength="17.8" lengthAdjust="spacingAndGlyphs">0.00</text>
<text x="683.1" y="549" textLength="31" lengthAdjust="spacingAndGlyphs">-0.2031</text>
<text x="13" y="565" textLength="48.8" lengthAdjust="spacingAndGlyphs">12 Jan 2023</text>
<text x="77" y="565" textLength="51.8" lengthAdjust="spacingAndGlyphs">12 Jan 08:35</text>
<text x="141" y="565" textLength="51.8" lengthAdjust="spacingAndGlyphs">12 Jan 09:15</text>
<text x="205" y="565" textLength="51.8" lengthAdjust="spacingAndGlyphs">12 Jan 09:55</text>
<text x="269" y="565" textLength="51.8" lengthAdjust="spacingAndGlyphs">12 Jan 10:35</text>
<text x="333" y="565" textLength="51.8" lengthAdjust="spacingAndGlyphs">12 Jan 11:15</text>
<text x="397" y="565" textLength="51.8" lengthAdjust="spacingAndGlyphs">12 Jan 11:55</text>
<text x="461" y="565" textLength="51.8" lengthAdjust="spacingAndGlyphs">12 Jan 12:35</text>
<text x="525" y="565" textLength="51.8" lengthAdjust="spacingAndGlyphs">12 Jan 13:15</text>
<text x="589" y="565" textLength="51.8" lengthAdjust="spacingAndGlyphs">12 Jan 13:55</text>
<text x="653" y="565" textLength="51.8" lengthAdjust="spacingAndGlyphs">12 Jan 14:35</text>
</g>
</svg>
<svg width="737" height="32" viewBox="0 0 737 32" style="position:absolute;left:0;top:0" font-family="'Liberation Sans', sans-serif">
  <!-- app icon -->
  <g shape-rendering="crispEdges">
    <rect x="11" y="11" width="12" height="9" fill="#4a86ff"/>
    <rect x="12" y="13" width="10" height="6" fill="#fffef4"/>
    <rect x="14" y="16" width="11" height="9" fill="#4a86ff"/>
    <rect x="15" y="18" width="9" height="6" fill="#ffffff"/>
  </g>
  <g shape-rendering="crispEdges" fill="#4a86ff"><rect x="13" y="15" width="1" height="1"/><rect x="14" y="14" width="1" height="1"/><rect x="15" y="15" width="1" height="1"/><rect x="17" y="14" width="1" height="1"/><rect x="18" y="15" width="1" height="1"/><rect x="19" y="16" width="1" height="1"/><rect x="16" y="19" width="1" height="1"/><rect x="17" y="20" width="1" height="1"/><rect x="18" y="21" width="1" height="1"/><rect x="18" y="22" width="1" height="1"/><rect x="19" y="20" width="1" height="1"/><rect x="20" y="19" width="1" height="1"/><rect x="21" y="20" width="1" height="1"/><rect x="22" y="21" width="1" height="1"/><rect x="22" y="22" width="1" height="1"/></g>
  <g shape-rendering="crispEdges" fill="#3f9a7a"><rect x="12" y="11" width="1" height="1"/><rect x="14" y="11" width="1" height="1"/><rect x="16" y="11" width="1" height="1"/><rect x="18" y="11" width="1" height="1"/><rect x="20" y="11" width="1" height="1"/><rect x="15" y="16" width="1" height="1"/><rect x="17" y="16" width="1" height="1"/><rect x="21" y="16" width="1" height="1"/><rect x="23" y="16" width="1" height="1"/><rect x="16" y="24" width="1" height="1"/><rect x="18" y="24" width="1" height="1"/><rect x="20" y="24" width="1" height="1"/><rect x="22" y="24" width="1" height="1"/></g>
  <!-- title -->
  <text x="31.1" y="22.5" font-size="11.3" fill="#0e0e1e" font-family="'Liberation Sans', sans-serif" textLength="58" lengthAdjust="spacingAndGlyphs">USDJPY,M5</text>
  <!-- minimize glyph -->
  <rect x="635.5" y="17.5" width="10" height="4" rx="1.2" fill="#f3f1ea" stroke="#3d435a" stroke-width="1"/>
  <!-- maximize glyph -->
  <rect x="669.5" y="13.5" width="10" height="8" rx="1.2" fill="#f6f4ee" stroke="#3d435a" stroke-width="1"/>
  <rect x="672.5" y="16.5" width="4" height="2" fill="#93abd0" stroke="#3d435a" stroke-width="1"/>
  <!-- close glyph -->
  <polygon points="703.7,13.5 707.4,13.5 708.7,15.2 710.0,13.5 713.7,13.5 710.6,17.5 713.7,21.5 710.0,21.5 708.7,19.8 707.4,21.5 703.7,21.5 706.8,17.5" fill="#f3f1f0" stroke="#4b3a4a" stroke-width="1" stroke-linejoin="round"/>
</svg>
</body>
</html>
